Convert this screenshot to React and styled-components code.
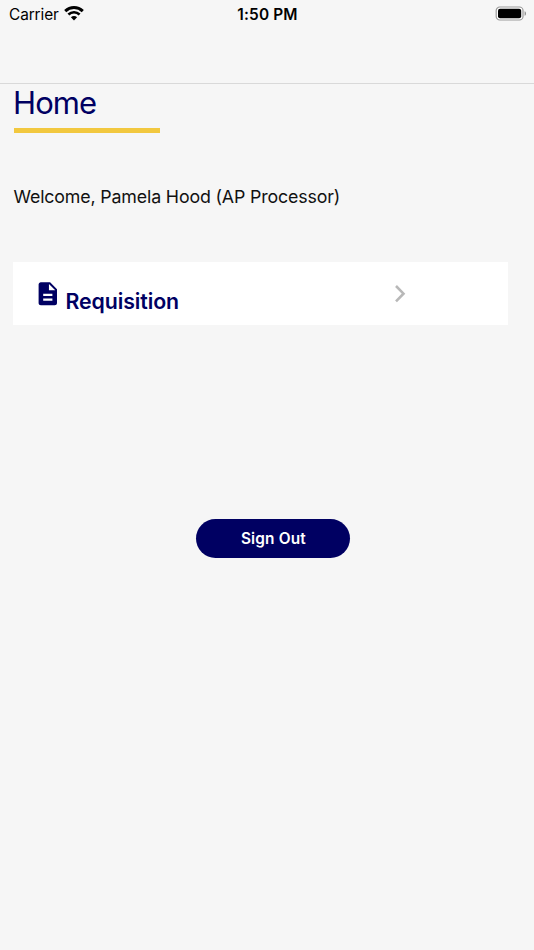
import React from 'react';
import styled, { createGlobalStyle } from 'styled-components'

const GlobalStyle = createGlobalStyle`
    body {
        margin: 0;
        background: #f6f6f6;
        font-family: Inter, "Liberation Sans", sans-serif;
    }
`

const Screen = styled.div`
    width: 534px;
    height: 950px;
    overflow: hidden;
    background: #f6f6f6;
`

const Header = styled.div`
    box-sizing: border-box;
    height: 84px;
    border-bottom: 1px solid #d9d9d9;
`

const StatusBar = styled.div`
    display: grid;
    grid-template-columns: 1fr auto 1fr;
    align-items: center;
    height: 28px;
    padding: 0 7px 0 9px;
    color: #000;
`

const Network = styled.div`
    display: flex;
    align-items: center;
    gap: 5px;
    font-size: 15.4px;
    line-height: 29px;
    letter-spacing: -0.1px;

    svg {
        margin-top: -2px;
    }
`

const Clock = styled.div`
    margin-left: -1px;
    font-size: 15.4px;
    font-weight: 600;
    line-height: 29px;
    letter-spacing: 0.15px;
`

const Battery = styled.svg`
    justify-self: end;
    margin-top: -2px;
`

const Content = styled.div`
    padding: 0 26px 0 13px;
`

const Title = styled.h1`
    margin: 0;
    height: 44px;
    color: #000062;
    font-size: 31px;
    font-weight: 400;
    line-height: 37px;
    letter-spacing: -0.9px;
`

const Underline = styled.div`
    width: 146px;
    height: 5px;
    margin-left: 1px;
    background: #f2c83f;
`

const Welcome = styled.p`
    margin: 52px 0 0;
    height: 77px;
    padding-left: 0.5px;
    color: #111;
    font-size: 17.8px;
    line-height: 24px;
    letter-spacing: -0.15px;
    white-space: nowrap;
`

const MenuItem = styled.div`
    display: flex;
    box-sizing: border-box;
    height: 63px;
    padding-left: 21px;
    background: #fff;
`

const MenuIcon = styled.svg`
    margin-top: 18px;
    fill: #000062;
`

const MenuLabel = styled.div`
    width: 325px;
    margin: 24px 0 0 4px;
    color: #000062;
    font-size: 21.3px;
    font-weight: 600;
    line-height: 30px;
    letter-spacing: -0.1px;
`

const Chevron = styled.svg`
    margin-top: 22px;
`

const SignOut = styled.button`
    display: block;
    width: 154px;
    height: 39px;
    margin: 193.5px auto 0 183.4px;
    padding: 0;
    border: 0;
    border-radius: 20px;
    background: #000062;
    color: #fff;
    font-family: inherit;
    font-size: 15.4px;
    font-weight: 600;
    line-height: 39px;
    letter-spacing: 0.15px;
`

const WifiIcon = () => (
    <svg width="20" height="15" viewBox="0 0 20 15" fill="none" stroke="#000">
        <path d="M1.2 5.1C6.2 .4 13.8 .4 18.8 5.1" strokeWidth="3" />
        <path d="M4.4 8.5C7.6 5.5 12.4 5.5 15.6 8.5" strokeWidth="2.6" />
        <path d="M6.9 11.2C8.7 9.6 11.3 9.6 13.1 11.2L10 14.4Z" fill="#000" stroke="none" />
    </svg>
)

const App = () => (
    <Screen>
        <GlobalStyle />
        <Header>
            <StatusBar>
                <Network>
                    <span>Carrier</span>
                    <WifiIcon />
                </Network>
                <Clock>1:50 PM</Clock>
                <Battery width="32" height="15" viewBox="0 0 32 15">
                    <rect x="1.2" y="1" width="26.8" height="13" rx="3.6" fill="#fff" stroke="#999" strokeWidth="1.2" />
                    <rect x="3" y="2.7" width="23.2" height="9.6" rx="2" fill="#000" />
                    <path d="M29.6 5.2C31.4 5.8 31.4 9.2 29.6 9.8Z" fill="#888" />
                </Battery>
            </StatusBar>
        </Header>
        <Content>
            <Title>Home</Title>
            <Underline />
            <Welcome>Welcome, Pamela Hood (AP Processor)</Welcome>
            <MenuItem>
                <MenuIcon width="27.6" height="27.6" viewBox="0 0 24 24">
                    <path d="M14 2H6c-1.1 0-1.99.9-1.99 2L4 20c0 1.1.89 2 1.99 2H18c1.1 0 2-.9 2-2V8l-6-6zm2 16H8v-2h8v2zm0-4H8v-2h8v2zm-3-5V3.5L18.5 9H13z" />
                </MenuIcon>
                <MenuLabel>Requisition</MenuLabel>
                <Chevron width="16" height="20" viewBox="0 0 16 20" fill="none" stroke="#b8b8b8" strokeWidth="2.6">
                    <path d="M5 2L12.5 9.7L5 17.4" />
                </Chevron>
            </MenuItem>
            <SignOut>Sign Out</SignOut>
        </Content>
    </Screen>
)

export default App;
